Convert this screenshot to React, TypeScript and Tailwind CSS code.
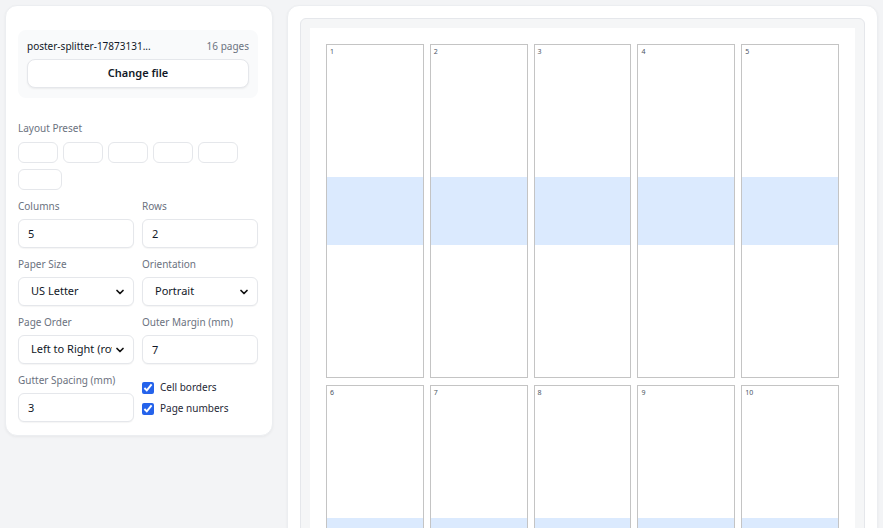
import { ChevronDown } from "lucide-react";

const presets = [0, 1, 2, 3, 4, 5];
const pages = [1, 2, 3, 4, 5, 6, 7, 8, 9, 10];

function Label({ children }: { children: React.ReactNode }) {
  return <div className="text-[10px] leading-[12px] text-[#6b7280]">{children}</div>;
}

function TextField({ label, value }: { label: string; value: string }) {
  return (
    <div className="flex flex-col gap-[7px]">
      <Label>{label}</Label>
      <input
        readOnly
        value={value}
        className="h-[29px] w-full rounded-md border border-[#e5e7eb] bg-white px-[9px] text-[11px] text-[#111827] shadow-[0_1px_1px_rgba(0,0,0,0.04)] outline-none"
      />
    </div>
  );
}

function SelectField({ label, value }: { label: string; value: string }) {
  return (
    <div className="flex flex-col gap-[7px]">
      <Label>{label}</Label>
      <div className="flex h-[29px] items-center gap-[2px] rounded-md border border-[#e5e7eb] bg-white pl-3 pr-[7px] shadow-[0_1px_1px_rgba(0,0,0,0.04)]">
        <span className="flex-1 overflow-hidden whitespace-nowrap text-[11px] text-[#111827]">{value}</span>
        <ChevronDown size={12} strokeWidth={3.5} className="shrink-0 text-[#111]" />
      </div>
    </div>
  );
}

function Check({ label }: { label: string }) {
  return (
    <label className="flex items-center gap-[6px] text-[10px] leading-[13px] text-[#1f2937]">
      <input type="checkbox" defaultChecked className="h-3 w-3 accent-[#2563eb]" />
      {label}
    </label>
  );
}

export default function App() {
  return (
    <div
      className="flex h-[528px] items-start gap-[14px] overflow-hidden bg-[#f3f4f6] p-[5px]"
      style={{ fontFamily: '"Noto Sans", "Liberation Sans", sans-serif' }}
    >
      <aside className="flex w-[268px] shrink-0 flex-col rounded-xl border border-[#eceef1] bg-white pb-[13px] pl-3 pr-[14px] pt-6 shadow-[0_1px_3px_rgba(0,0,0,0.05)]">
        <div className="flex flex-col gap-[6px] rounded-lg bg-[#f9fafb] px-[9px] pb-[10px] pt-[9px]">
          <div className="flex items-center justify-between text-[10px] leading-[14px]">
            <span className="text-[#111827]">poster-splitter-17873131...</span>
            <span className="text-[#6b7280]">16 pages</span>
          </div>
          <button className="h-[29px] rounded-lg border border-[#e5e7eb] bg-white text-[11px] font-semibold text-[#111827] shadow-[0_1px_2px_rgba(0,0,0,0.06)]">
            Change file
          </button>
        </div>

        <div className="mt-6 flex flex-col gap-[8px]">
          <Label>Layout Preset</Label>
          <div className="flex flex-wrap gap-x-[5px] gap-y-[6px]">
            {presets.map((p) => (
              <div
                key={p}
                className={`h-[21px] rounded-md border border-[#e5e7eb] bg-white ${p === 5 ? "w-[44px]" : "w-[40px]"}`}
              />
            ))}
          </div>
        </div>

        <div className="mt-[10px] grid grid-cols-2 gap-x-2 gap-y-[10px]">
          <TextField label="Columns" value="5" />
          <TextField label="Rows" value="2" />
          <SelectField label="Paper Size" value="US Letter" />
          <SelectField label="Orientation" value="Portrait" />
          <SelectField label="Page Order" value="Left to Right (rows)" />
          <TextField label="Outer Margin (mm)" value="7" />
          <TextField label="Gutter Spacing (mm)" value="3" />
          <div className="flex flex-col gap-2 pt-[7px]">
            <Check label="Cell borders" />
            <Check label="Page numbers" />
          </div>
        </div>
      </aside>

      <main className="min-w-0 flex-1 rounded-xl border border-[#eceef1] bg-white p-3 shadow-[0_1px_3px_rgba(0,0,0,0.05)]">
        <div className="rounded-md border border-[#e5e7eb] bg-[#f5f6f7] p-[9px]">
          <div className="bg-white pb-4 pl-4 pr-[16px] pt-4">
            <div className="grid grid-cols-5 gap-x-[6px] gap-y-[7px]">
              {pages.map((n) => (
                <div key={n} className="relative flex h-[334px] flex-col border border-[#c4c4c4] bg-white">
                  <span className="absolute left-[3px] top-[2px] text-[7px] leading-[9px] text-[#4b5563]">{n}</span>
                  <div className="h-[132px]" />
                  <div className="h-[68px] bg-[#dbeafe]" />
                </div>
              ))}
            </div>
          </div>
        </div>
      </main>
    </div>
  );
}
